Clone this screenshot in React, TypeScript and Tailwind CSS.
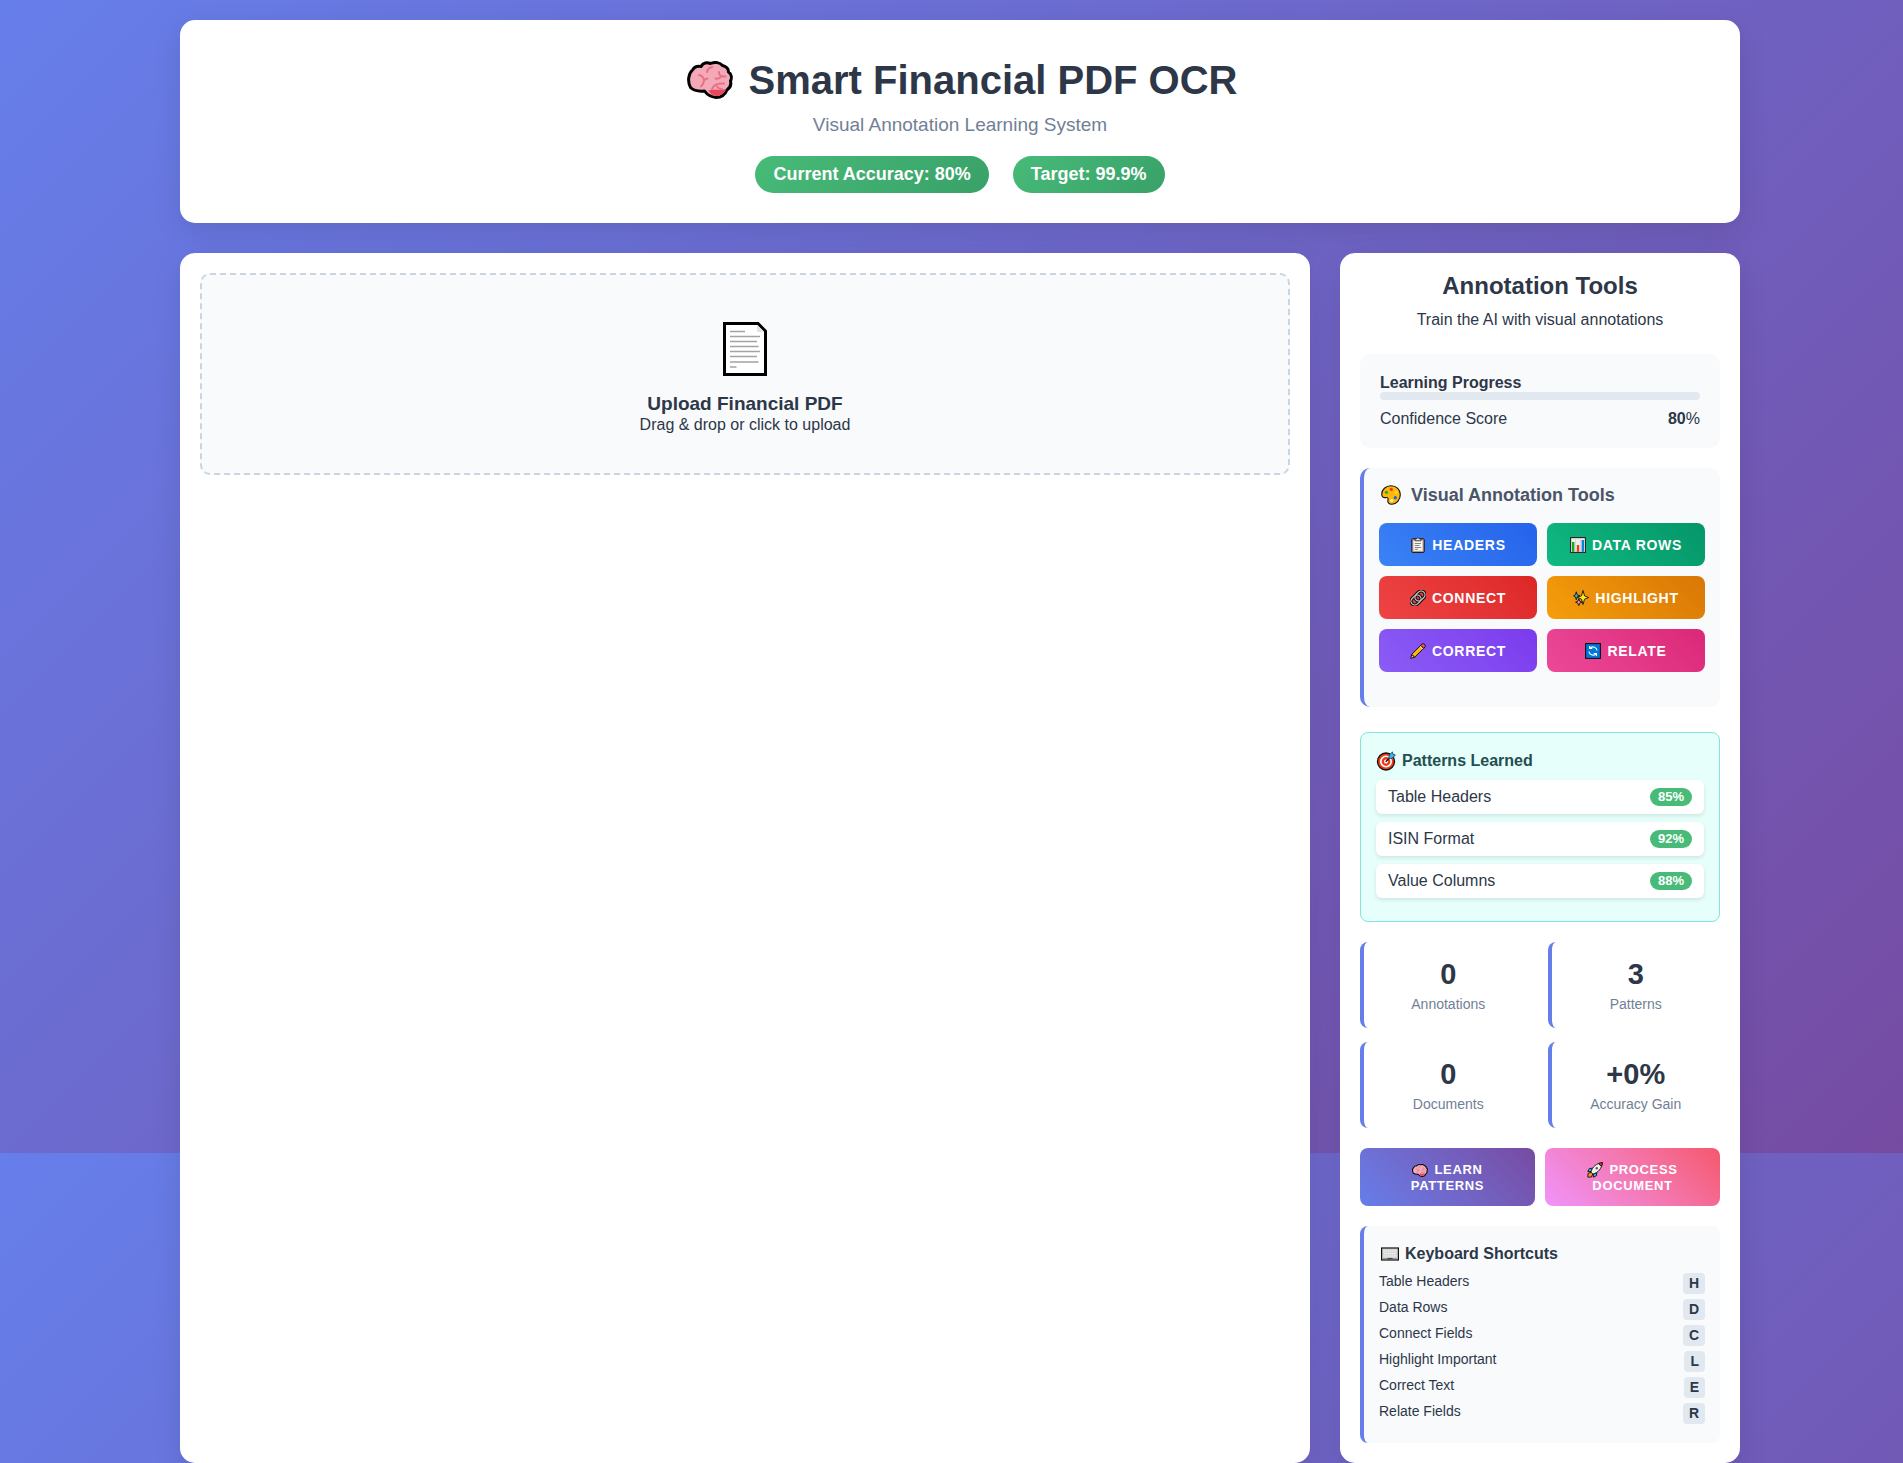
import type { ReactNode } from "react";

type IconProps = { className?: string };

function BrainIcon({ className }: IconProps) {
  return (
    <svg viewBox="0 0 46 38" className={className} aria-hidden="true">
      <path
        d="M5.500 9C7.500 5.500 11 5 14 5.500C16 1.500 20 1 23.500 2.500C28 0.500 33 1.500 35.500 4.500C39.500 5.500 41.500 8 41.500 11C44.500 13 45 17 43.500 20C44.500 24 43 27 40 29C38 34 34 36.500 29 36.500C24 36 20 33.500 17.500 30C12 30.500 7 30 3.500 26.500C0.500 21 1 13 5.500 9Z"
        fill="#f4a9b8"
        stroke="#000"
        strokeWidth="3"
        strokeLinejoin="round"
      />
      <path d="M21.500 29.500C27 28 33 29.500 39 28C37.500 32.500 33.500 35 29 35C25.500 34.500 23 32.500 21.500 29.500Z" fill="#e8485c" />
      <path
        d="M20 11C20.500 8 22.500 6.500 25 6M12 14C14.500 14.500 16.500 16 17 19L20.500 17.500M17 19C17 21.500 16 23.500 14 25.500M32 11C31.500 14 34 16 38.500 15.500M34 15.500C33 17.500 31 18 28.500 17.500M25 28C26.500 24 31 22 37 22.500M30 25.500C31 27 33 28 35 28"
        fill="none"
        stroke="#e67385"
        strokeWidth="2"
        strokeLinecap="round"
      />
    </svg>
  );
}

function PageIcon({ className }: IconProps) {
  return (
    <svg viewBox="0 0 44 54" className={className} aria-hidden="true">
      <path d="M1.500 1.500H35L42.500 9V52.500H1.500Z" fill="#fff" stroke="#000" strokeWidth="3" />
      <path d="M34 3.500V10H40.500" fill="#e3e3e3" />
      <path
        d="M7 9.500H22M7 14.500H37M7 19.500H34M7 24.500H35.500M7 29.500H37M7 34.500H34M7 40H35.500M7 45H13.500"
        stroke="#a3a3a3"
        strokeWidth="1.600"
        fill="none"
      />
    </svg>
  );
}

function PaletteIcon({ className }: IconProps) {
  return (
    <svg viewBox="0 0 20 20" className={className} aria-hidden="true">
      <path
        d="M10 0.800C15.500 0.800 19.300 4.500 19.300 9.500C19.300 15 15.500 19.200 11 19.200C7.500 19.200 6.200 17 7 14.800C7.500 13 6.500 12.300 4.500 12.600C2 12.900 0.700 11.500 0.700 9.300C0.700 4.500 4.800 0.800 10 0.800Z"
        fill="#ffb70a"
        stroke="#111"
        strokeWidth="1.100"
      />
      <circle cx="5.500" cy="7.300" r="1.600" fill="#16b21b" />
      <circle cx="10.300" cy="4.400" r="1.600" fill="#f03a17" />
      <circle cx="15" cy="7.300" r="1.600" fill="#ffde1c" />
      <circle cx="14.300" cy="12.700" r="1.600" fill="#1063e0" />
      <circle cx="10.700" cy="15.600" r="1.500" fill="#fff3c8" />
    </svg>
  );
}

function ClipboardIcon({ className }: IconProps) {
  return (
    <svg viewBox="0 0 16 16" className={className} aria-hidden="true">
      <rect x="1.800" y="1.800" width="12.400" height="13.600" rx="0.800" fill="#c6a48e" stroke="#111" strokeWidth="1" />
      <rect x="3.500" y="3.500" width="9" height="10.300" fill="#f5f5f5" />
      <path d="M4.800 6.500H11M4.800 8.500H9.500M4.800 10.500H11.200M4.800 12.300H8" stroke="#777" strokeWidth="0.900" />
      <path d="M5 3.800V1.900H6.500C6.700 0.300 9.300 0.300 9.500 1.900H11V3.800Z" fill="#ddd" stroke="#222" strokeWidth="0.800" />
    </svg>
  );
}

function ChartIcon({ className }: IconProps) {
  return (
    <svg viewBox="0 0 16 16" className={className} aria-hidden="true">
      <rect x="0.600" y="0.600" width="14.800" height="14.800" fill="#efefef" stroke="#222" strokeWidth="1.100" />
      <path d="M5.600 1V15M10.400 1V15" stroke="#cfcfcf" strokeWidth="0.700" />
      <rect x="2" y="5" width="2.400" height="9.800" fill="#17a81a" />
      <rect x="6.800" y="8" width="2.400" height="6.800" fill="#f03a17" />
      <rect x="11.600" y="3" width="2.400" height="11.800" fill="#0f7fd7" />
    </svg>
  );
}

function LinkIcon({ className }: IconProps) {
  return (
    <svg viewBox="0 0 16 16" className={className} aria-hidden="true">
      <g fill="none" transform="rotate(-45 8 8)">
        <rect x="-0.300" y="4.200" width="11" height="7.600" rx="3.800" stroke="#111" strokeWidth="3.400" />
        <rect x="5.300" y="4.200" width="11" height="7.600" rx="3.800" stroke="#111" strokeWidth="3.400" />
        <rect x="-0.300" y="4.200" width="11" height="7.600" rx="3.800" stroke="#c9c9c9" strokeWidth="1.200" />
        <rect x="5.300" y="4.200" width="11" height="7.600" rx="3.800" stroke="#c9c9c9" strokeWidth="1.200" />
      </g>
    </svg>
  );
}

function SparklesIcon({ className }: IconProps) {
  return (
    <svg viewBox="0 0 16 16" className={className} aria-hidden="true">
      <g stroke="#111" strokeWidth="0.900" strokeLinejoin="round">
        <path d="M3.300 1.800L4.200 4.800L6.900 5.800L4.200 6.800L3.300 9.800L2.400 6.800L0.500 5.800L2.400 4.800Z" fill="#31b8ee" />
        <path d="M5.800 8.800L6.700 11.200L9 12.200L6.700 13.200L5.800 15.600L4.900 13.200L2.600 12.200L4.900 11.200Z" fill="#f78ac5" />
        <path d="M10 0.500L11.500 5.800L15.600 7.500L11.500 9.200L10 14.500L8.500 9.200L4.600 7.500L8.500 5.800Z" fill="#ffe81a" />
      </g>
    </svg>
  );
}

function PencilIcon({ className }: IconProps) {
  return (
    <svg viewBox="0 0 16 16" className={className} aria-hidden="true">
      <g stroke="#111" strokeWidth="1" strokeLinejoin="round">
        <path d="M0.700 15.300L1.800 11.300L4.700 14.200Z" fill="#f3d3a8" />
        <path d="M1.800 11.300L10.700 2.400L13.600 5.300L4.700 14.200Z" fill="#ffb70a" />
        <path d="M10.700 2.400L12 1.100C13.700 -0.300 16.300 2.300 14.900 4L13.600 5.300Z" fill="#f0505a" />
      </g>
      <path d="M10.200 3.400L12.600 5.800" stroke="#d9d9d9" strokeWidth="1.100" />
    </svg>
  );
}

function CycleIcon({ className }: IconProps) {
  return (
    <svg viewBox="0 0 16 16" className={className} aria-hidden="true">
      <rect x="0.600" y="0.600" width="14.800" height="14.800" fill="#0078d7" stroke="#111" strokeWidth="1.100" />
      <g fill="none" stroke="#fff" strokeWidth="1.100">
        <path d="M5.200 4.900A4.200 4.200 0 0 1 12.100 7.500M10.800 11.100A4.200 4.200 0 0 1 3.900 8.500" />
        <path d="M7.300 5.400H4.600V2.900M8.700 10.600H11.400V13.100" />
      </g>
    </svg>
  );
}

function TargetIcon({ className }: IconProps) {
  return (
    <svg viewBox="0 0 20 20" className={className} aria-hidden="true">
      <circle cx="10" cy="10.500" r="8.500" fill="#f03a17" stroke="#111" strokeWidth="1.300" />
      <circle cx="10" cy="10.500" r="5.200" fill="none" stroke="#fff" strokeWidth="1.600" />
      <circle cx="10" cy="10.500" r="2" fill="#fff" />
      <path d="M9.700 10.800L14.500 6" stroke="#111" strokeWidth="1.300" />
      <path d="M12.800 7.600L13.200 4L16.400 0.900L17 3.300L19.400 3.900L16.300 7.200Z" fill="#31b8ee" stroke="#14445c" strokeWidth="0.800" />
    </svg>
  );
}

function RocketIcon({ className }: IconProps) {
  return (
    <svg viewBox="0 0 16 16" className={className} aria-hidden="true">
      <g stroke="#111" strokeWidth="0.900" strokeLinejoin="round">
        <path d="M4.200 10.200L1 11.500L0.800 15.200L4.500 15L5.800 11.800Z" fill="#f7941d" />
        <path d="M5.500 6.200L2.300 6.600L0.800 9.600L4.200 9.600ZM9.800 10.500L9.400 13.700L6.400 15.200L6.400 11.800Z" fill="#31b8ee" />
        <path d="M3.900 10.100C5.200 5 9.500 1.200 15.400 0.600C14.800 6.500 11 10.800 5.900 12.100Z" fill="#efefef" />
        <path d="M11.600 1.700C12.800 1 14 0.700 15.400 0.600C15.300 2 15 3.200 14.300 4.400Z" fill="#f03a17" />
      </g>
      <circle cx="9.800" cy="6.200" r="1.200" fill="#5b5b5b" />
    </svg>
  );
}

function KeyboardIcon({ className }: IconProps) {
  return (
    <svg viewBox="0 0 18 14" className={className} aria-hidden="true">
      <rect x="0.600" y="1" width="16.800" height="12" fill="#d6d6d6" stroke="#111" strokeWidth="1.200" />
      <path d="M2.500 4H15.500M3 6.500H15M2.500 9H15.500" stroke="#f7f7f7" strokeWidth="1.200" strokeDasharray="1.300 0.700" />
      <path d="M2 11.500H16" stroke="#9b9b9b" strokeWidth="1" />
      <path d="M6.500 11.500H11.500" stroke="#444" strokeWidth="1.200" />
    </svg>
  );
}

const tools: { label: string; icon: ReactNode; color: string }[] = [
  { label: "Headers", icon: <ClipboardIcon className="size-4" />, color: "from-[#3b82f6] to-[#2563eb]" },
  { label: "Data Rows", icon: <ChartIcon className="size-4" />, color: "from-[#10b981] to-[#059669]" },
  { label: "Connect", icon: <LinkIcon className="size-4" />, color: "from-[#ef4444] to-[#dc2626]" },
  { label: "Highlight", icon: <SparklesIcon className="size-4" />, color: "from-[#f59e0b] to-[#d97706]" },
  { label: "Correct", icon: <PencilIcon className="size-4" />, color: "from-[#8b5cf6] to-[#7c3aed]" },
  { label: "Relate", icon: <CycleIcon className="size-4" />, color: "from-[#ec4899] to-[#db2777]" },
];

const patterns = [
  { name: "Table Headers", score: "85%" },
  { name: "ISIN Format", score: "92%" },
  { name: "Value Columns", score: "88%" },
];

const stats = [
  { value: "0", label: "Annotations" },
  { value: "3", label: "Patterns" },
  { value: "0", label: "Documents" },
  { value: "+0%", label: "Accuracy Gain" },
];

const shortcuts = [
  { name: "Table Headers", key: "H" },
  { name: "Data Rows", key: "D" },
  { name: "Connect Fields", key: "C" },
  { name: "Highlight Important", key: "L" },
  { name: "Correct Text", key: "E" },
  { name: "Relate Fields", key: "R" },
];

function Pill({ children }: { children: ReactNode }) {
  return (
    <span className="rounded-full bg-linear-135 from-[#48bb78] to-[#38a169] px-[18px] py-2 text-[18px] leading-[21px] font-bold text-white">
      {children}
    </span>
  );
}

export default function App() {
  return (
    <div className="bg-[linear-gradient(135deg,#667eea_0%,#764ba2_100%)] bg-size-[1920px_1153px] pt-5 pr-[163px] pl-[180px] font-['Liberation_Sans',Arial,sans-serif] text-base leading-[18px] text-[#2d3748]">
      <header className="mb-[30px] flex flex-col items-center rounded-[15px] bg-white p-[30px] shadow-[0_10px_30px_rgba(0,0,0,0.1)]">
        <h1 className="flex items-center gap-4 pl-1 text-[40px] leading-[60px] font-bold">
          <BrainIcon className="h-[38px] w-[46px]" />
          Smart Financial PDF OCR
        </h1>
        <p className="mt-1 text-[19px] leading-[22px] text-[#718096]">Visual Annotation Learning System</p>
        <div className="mt-5 flex gap-6">
          <Pill>Current Accuracy: 80%</Pill>
          <Pill>Target: 99.9%</Pill>
        </div>
      </header>

      <div className="grid grid-cols-[minmax(0,1fr)_400px] gap-[30px]">
        <main className="rounded-[15px] bg-white p-5 shadow-[0_10px_30px_rgba(0,0,0,0.1)]">
          <label className="flex cursor-pointer flex-col items-center rounded-[10px] border-2 border-dashed border-[#cbd5e0] bg-[#f8fafc] px-10 pt-[47px] pb-[39px]">
            <PageIcon className="h-[54px] w-11" />
            <span className="mt-4 text-[19px] leading-6 font-bold">Upload Financial PDF</span>
            <span>Drag &amp; drop or click to upload</span>
            <input type="file" accept="application/pdf" className="sr-only" />
          </label>
        </main>

        <aside className="rounded-[15px] bg-white p-5 shadow-[0_10px_30px_rgba(0,0,0,0.1)]">
          <div className="mb-[25px] text-center">
            <h2 className="mb-[13px] text-[24px] leading-[25px] font-bold">Annotation Tools</h2>
            <p>Train the AI with visual annotations</p>
          </div>

          <section className="mb-5 rounded-[10px] bg-[#f8fafc] p-5">
            <h3 className="font-bold">Learning Progress</h3>
            <div
              role="progressbar"
              aria-label="Learning Progress"
              aria-valuenow={0}
              className="h-2 rounded-sm bg-[#e2e8f0]"
            />
            <div className="mt-2.5 flex justify-between">
              <span>Confidence Score</span>
              <span>
                <strong>80</strong>%
              </span>
            </div>
          </section>

          <section className="mb-[25px] rounded-[10px] border-l-4 border-[#667eea] bg-[#f8fafc] px-[15px] pt-[15px] pb-[35px]">
            <h3 className="mb-4 flex items-center gap-2.5 pl-0.5 text-[18px] leading-6 font-bold text-[#4a5568]">
              <PaletteIcon className="size-5" />
              Visual Annotation Tools
            </h3>
            <div className="grid grid-cols-2 gap-2.5">
              {tools.map((tool) => (
                <button
                  key={tool.label}
                  type="button"
                  className={`flex h-[43px] items-center justify-center gap-1.5 rounded-lg bg-linear-45 text-sm font-bold tracking-wider text-white uppercase ${tool.color}`}
                >
                  {tool.icon}
                  {tool.label}
                </button>
              ))}
            </div>
          </section>

          <section className="mb-5 rounded-lg border border-[#81e6d9] bg-[#e6fffa] px-[15px] pt-[15px] pb-[23px]">
            <h3 className="mb-[7px] flex items-center gap-1.5 leading-[25px] font-bold text-[#234e52]">
              <TargetIcon className="size-5" />
              Patterns Learned
            </h3>
            <ul className="flex flex-col gap-2">
              {patterns.map((pattern) => (
                <li
                  key={pattern.name}
                  className="flex items-center justify-between rounded-md bg-white px-3 py-2 shadow-[0_2px_4px_rgba(0,0,0,0.1)]"
                >
                  <span>{pattern.name}</span>
                  <span className="rounded-full bg-[#48bb78] px-2 text-[13px] font-bold text-white">
                    {pattern.score}
                  </span>
                </li>
              ))}
            </ul>
          </section>

          <dl className="mb-5 grid grid-cols-2 gap-x-[15px] gap-y-3.5 text-center">
            {stats.map((stat) => (
              <div
                key={stat.label}
                className="flex flex-col-reverse gap-1.5 rounded-lg border-l-4 border-[#667eea] p-4"
              >
                <dt className="text-sm leading-4 text-[#718096]">{stat.label}</dt>
                <dd className="text-[29px] leading-8 font-bold">{stat.value}</dd>
              </div>
            ))}
          </dl>

          <div className="mb-5 grid grid-cols-2 gap-2.5 text-[13px] leading-4 font-bold tracking-wider text-white uppercase">
            <button
              type="button"
              className="flex h-[58px] flex-col items-center justify-center rounded-lg bg-linear-45 from-[#667eea] to-[#764ba2] pt-0.5 uppercase"
            >
              <span className="flex items-center gap-1.5">
                <BrainIcon className="h-[13px] w-4" />
                Learn
              </span>
              Patterns
            </button>
            <button
              type="button"
              className="flex h-[58px] flex-col items-center justify-center rounded-lg bg-linear-45 from-[#f093fb] to-[#f5576c] pt-0.5 uppercase"
            >
              <span className="flex items-center gap-1.5">
                <RocketIcon className="size-4" />
                Process
              </span>
              Document
            </button>
          </div>

          <section className="rounded-lg border-l-4 border-[#667eea] bg-[#f8fafc] px-[15px] pt-[15px] pb-[19px]">
            <h3 className="mb-[7px] flex items-center gap-1.5 pl-0.5 leading-[25px] font-bold">
              <KeyboardIcon className="h-3.5 w-[18px]" />
              Keyboard Shortcuts
            </h3>
            <ul className="flex flex-col gap-[5px] text-sm leading-4">
              {shortcuts.map((shortcut) => (
                <li key={shortcut.key} className="flex justify-between">
                  <span>{shortcut.name}</span>
                  <kbd className="rounded-sm bg-[#e2e8f0] px-1.5 font-['Liberation_Sans',Arial,sans-serif] text-sm leading-[21px] font-bold">
                    {shortcut.key}
                  </kbd>
                </li>
              ))}
            </ul>
          </section>
        </aside>
      </div>
    </div>
  );
}
